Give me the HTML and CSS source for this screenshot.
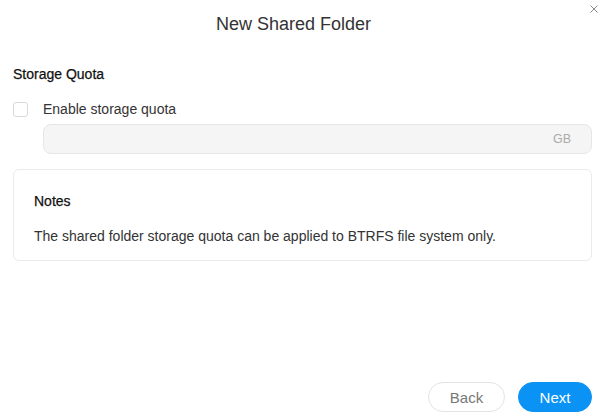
FILE: index.html
```html
<!DOCTYPE html>
<html>
<head>
<meta charset="utf-8">
<link rel="stylesheet" href="styles.css">
</head>
<body>
<div class="dialog">
  <button class="close" aria-label="close">
    <svg width="8" height="8" viewBox="0 0 8 8"><path d="M0.5 0.5L7.5 7.5M7.5 0.5L0.5 7.5" stroke="#888" stroke-width="1" fill="none"/></svg>
  </button>
  <header class="title">New Shared Folder</header>
  <main class="content">
    <h2 class="section">Storage Quota</h2>
    <label class="check-row">
      <span class="checkbox"></span>
      <span class="check-label">Enable storage quota</span>
    </label>
    <div class="input">
      <span class="unit">GB</span>
    </div>
    <div class="notes">
      <div class="notes-title">Notes</div>
      <div class="notes-text">The shared folder storage quota can be applied to BTRFS file system only.</div>
    </div>
  </main>
  <footer class="footer">
    <button class="btn btn-back">Back</button>
    <button class="btn btn-next">Next</button>
  </footer>
</div>
</body>
</html>
```
FILE: styles.css
```css
* { box-sizing: border-box; }
html, body { margin: 0; padding: 0; background: #fff; }
body {
  font-family: "Liberation Sans", Arial, sans-serif;
  color: #333;
  width: 607px;
  height: 416px;
  overflow: hidden;
}
.dialog {
  position: relative;
  height: 416px;
  display: flex;
  flex-direction: column;
}
.close {
  position: absolute;
  top: 5px;
  right: 9px;
  width: 8px;
  height: 8px;
  padding: 0;
  border: 0;
  background: none;
  display: flex;
}
.title {
  text-align: center;
  font-size: 18px;
  color: #333;
  padding: 14px 20px 0 0;
  height: 50px;
}
.content {
  padding: 0 15px 0 13px;
  flex: 1;
}
.section {
  margin: 16px 0 0 0;
  font-size: 14px;
  font-weight: normal;
  color: #111;
  -webkit-text-stroke: 0.25px #111;
  line-height: 16px;
}
.check-row {
  display: flex;
  align-items: center;
  margin-top: 19px;
  height: 16px;
}
.checkbox {
  width: 15px;
  height: 15px;
  border: 1px solid #d9d9d9;
  border-radius: 3px;
  margin-right: 15px;
}
.check-label {
  font-size: 14px;
  color: #333;
}
.input {
  margin: 7px 0 0 30px;
  height: 30px;
  border: 1px solid #e6e6e6;
  border-radius: 8px;
  background: #f5f5f5;
  display: flex;
  align-items: center;
  justify-content: flex-end;
  padding-right: 20px;
}
.unit {
  font-size: 12.5px;
  color: #aaa;
}
.notes {
  margin-top: 15px;
  border: 1px solid #ebebeb;
  border-radius: 6px;
  padding: 23px 20px 17px 20px;
  height: 92px;
}
.notes-title {
  font-size: 14px;
  color: #111;
  -webkit-text-stroke: 0.25px #111;
  line-height: 16px;
}
.notes-text {
  margin-top: 19px;
  font-size: 14px;
  color: #333;
  line-height: 16px;
}
.footer {
  display: flex;
  justify-content: flex-end;
  gap: 13px;
  padding: 0 15px 4px 0;
}
.btn {
  height: 30px;
  border-radius: 15px;
  font-family: "Liberation Sans", Arial, sans-serif;
  font-size: 15px;
  padding: 0;
}
.btn-back {
  width: 77px;
  background: #fff;
  border: 1px solid #e3e3e3;
  color: #777;
}
.btn-next {
  width: 74px;
  background: #0a93f5;
  border: 1px solid #0a93f5;
  color: #fff;
}
```
